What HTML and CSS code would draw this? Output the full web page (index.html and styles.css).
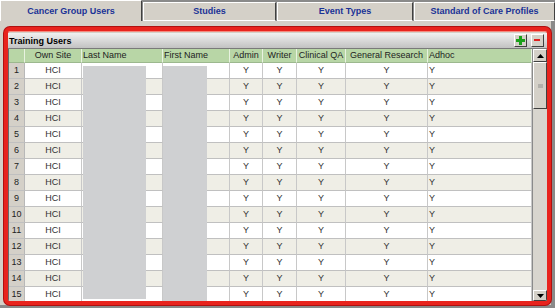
FILE: index.html
```html
<!DOCTYPE html>
<html lang="en">

<head>
    <meta charset="UTF-8">
    <title>Cancer Group Users</title>
    <link rel="stylesheet" href="styles.css">
</head>

<body>
    <div class="window">
        <!-- Tab strip -->
        <div class="tabs">
            <div class="tab tab-1 active">Cancer Group Users</div>
            <div class="tab tab-2">Studies</div>
            <div class="tab tab-3">Event Types</div>
            <div class="tab tab-4">Standard of Care Profiles</div>
        </div>

        <div class="panel">
            <div class="frame">
                <div class="titlebar">
                    <span class="title">Training Users</span>
                    <div class="tools">
                        <button class="tool add" title="Add">
                            <svg width="9" height="9" viewBox="0 0 9 9"><path d="M3 0h3v3h3v3H6v3H3V6H0V3h3z" fill="#1aa01a"/></svg>
                        </button>
                        <button class="tool remove" title="Remove">
                            <svg width="9" height="9" viewBox="0 0 9 9"><rect x="1" y="3" width="6" height="2" fill="#e02020"/></svg>
                        </button>
                    </div>
                </div>

                <div class="grid-wrap">
                    <table class="grid" id="grid">
                        <colgroup>
                            <col class="c-num"><col class="c-site"><col class="c-last"><col class="c-first">
                            <col class="c-admin"><col class="c-writer"><col class="c-qa"><col class="c-gr"><col class="c-adhoc">
                        </colgroup>
                        <thead>
                            <tr>
                                <th></th>
                                <th>Own Site</th>
                                <th class="left">Last Name</th>
                                <th class="left">First Name</th>
                                <th>Admin</th>
                                <th>Writer</th>
                                <th>Clinical QA</th>
                                <th>General Research</th>
                                <th class="left">Adhoc</th>
                            </tr>
                        </thead>
                        <tbody id="rows"></tbody>
                    </table>

                    <!-- blanked out names -->
                    <div class="mask mask-last"></div>
                    <div class="mask mask-first"></div>

                    <div class="scrollbar">
                        <div class="sb-btn up"><svg width="7" height="4" viewBox="0 0 7 4"><path d="M3.5 0L7 4H0z" fill="#000"/></svg></div>
                        <div class="sb-thumb"><span class="grip"></span></div>
                        <div class="sb-track"></div>
                        <div class="sb-btn down"><svg width="7" height="4" viewBox="0 0 7 4"><path d="M0 0h7L3.5 4z" fill="#000"/></svg></div>
                    </div>
                </div>
            </div>
        </div>
    </div>

    <script>
        var rows = "";
        for (var i = 1; i <= 15; i++) {
            rows += '<tr class="' + (i % 2 === 0 ? 'even' : 'odd') + '">' +
                '<td class="num">' + i + '</td>' +
                '<td>HCI</td><td></td><td></td>' +
                '<td>Y</td><td>Y</td><td>Y</td><td>Y</td>' +
                '<td class="left">Y</td></tr>';
        }
        document.getElementById("rows").innerHTML = rows;
    </script>
</body>

</html>
```

FILE: styles.css
```css
body {
    margin: 0;
    background-color: #8a8a8a;
    font-family: "Liberation Sans", Arial, sans-serif;
}

.window {
    width: 555px;
    height: 308px;
    overflow: hidden;
}

/* tabs */
.tabs {
    display: flex;
    align-items: flex-end;
    gap: 1px;
    height: 21px;
}

.tab {
    box-sizing: border-box;
    height: 19px;
    background-color: #d4d0c8;
    border-top: 1px solid #fff;
    border-left: 1px solid #fff;
    border-right: 1px solid #404040;
    border-bottom: 1px solid #fff;
    color: #1a3296;
    font-size: 9px;
    font-weight: bold;
    text-align: center;
    line-height: 16px;
}

.tab.active {
    height: 21px;
    border-bottom: none;
    line-height: 20px;
}

.tab-1 { width: 142px; }
.tab-2 { width: 133px; }
.tab-3 { width: 136px; }
.tab-4 { width: 141px; }

.panel {
    width: 551px;
    height: 284px;
    background-color: #d4d0c8;
    padding: 6px 0 0 4px;
    box-sizing: border-box;
}

/* red outline round the grid */
.frame {
    box-sizing: border-box;
    height: 278px;
    border: 4px solid #e8231d;
    border-radius: 6px;
    box-shadow: inset 0 0 0 1px #f58a80, 0 0 0 1px #b01010;
    padding-top: 2px;
    background-color: #d4d0c8;
    overflow: hidden;
}

.titlebar {
    box-sizing: border-box;
    height: 16px;
    display: flex;
    align-items: center;
    justify-content: space-between;
    padding: 0 3px 0 1px;
    background: linear-gradient(#f0f0f0, #c2c2c2);
    border-bottom: 1px solid #7a7a7a;
}

.title {
    font-size: 9px;
    font-weight: bold;
    color: #000;
}

.tools {
    display: flex;
    gap: 4px;
}

.tool {
    box-sizing: border-box;
    width: 13px;
    height: 13px;
    padding: 0;
    display: flex;
    align-items: center;
    justify-content: center;
    background-color: #d4d0c8;
    border: 1px solid;
    border-color: #fff #404040 #404040 #fff;
}

/* grid */
.grid-wrap {
    position: relative;
    display: flex;
    height: 252px;
    overflow: hidden;
}

.grid {
    border-collapse: separate;
    border-spacing: 0;
    table-layout: fixed;
    width: 524px;
    border-left: 1px solid #6a6a6a;
    font-size: 9px;
    color: #333;
}

.c-num { width: 16px; }
.c-site { width: 57px; }
.c-last { width: 81px; }
.c-first { width: 67px; }
.c-admin { width: 33px; }
.c-writer { width: 34px; }
.c-qa { width: 49px; }
.c-gr { width: 82px; }
.c-adhoc { width: 104px; }

.grid th {
    height: 13px;
    padding: 0 1px;
    background-color: #b8d6a6;
    border-right: 1px solid #e8f2e0;
    border-bottom: 1px solid #9cb88e;
    font-weight: normal;
    color: #222;
    line-height: 13px;
    white-space: nowrap;
    overflow: hidden;
}

.grid td {
    height: 15px;
    padding: 0 1px;
    border-right: 1px solid #c8c8c8;
    border-bottom: 1px solid #c0c0c0;
    text-align: center;
    line-height: 15px;
}

.grid .left {
    text-align: left;
}

.grid tr.odd td { background-color: #fff; }
.grid tr.even td { background-color: #efeee6; }

.grid tr td.num {
    background-color: #d4d0c8;
    border-right: 1px solid #b8b8b8;
    color: #222;
}

.mask {
    position: absolute;
    top: 17px;
    bottom: 2px;
    background-color: #cfd0d2;
}

.mask-last {
    left: 75px;
    width: 63px;
}

.mask-first {
    left: 155px;
    width: 44px;
    bottom: 0;
}

/* vertical scrollbar */
.scrollbar {
    flex: 1;
    display: flex;
    flex-direction: column;
    background-color: #d8d5ce;
    border-left: 1px solid #8a8a8a;
}

.sb-btn {
    box-sizing: border-box;
    height: 13px;
    display: flex;
    align-items: center;
    justify-content: center;
    background-color: #d4d0c8;
    border: 1px solid;
    border-color: #fff #404040 #404040 #fff;
}

.sb-btn.down {
    height: 11px;
}

.sb-thumb {
    box-sizing: border-box;
    height: 47px;
    display: flex;
    align-items: center;
    justify-content: center;
    background-color: #d4d0c8;
    border: 1px solid;
    border-color: #fff #404040 #404040 #fff;
}

.grip {
    width: 5px;
    height: 4px;
    background-image: radial-gradient(circle, #8a8a8a 0.6px, transparent 0.8px);
    background-size: 2px 2px;
}

.sb-track {
    flex: 1;
}
```
